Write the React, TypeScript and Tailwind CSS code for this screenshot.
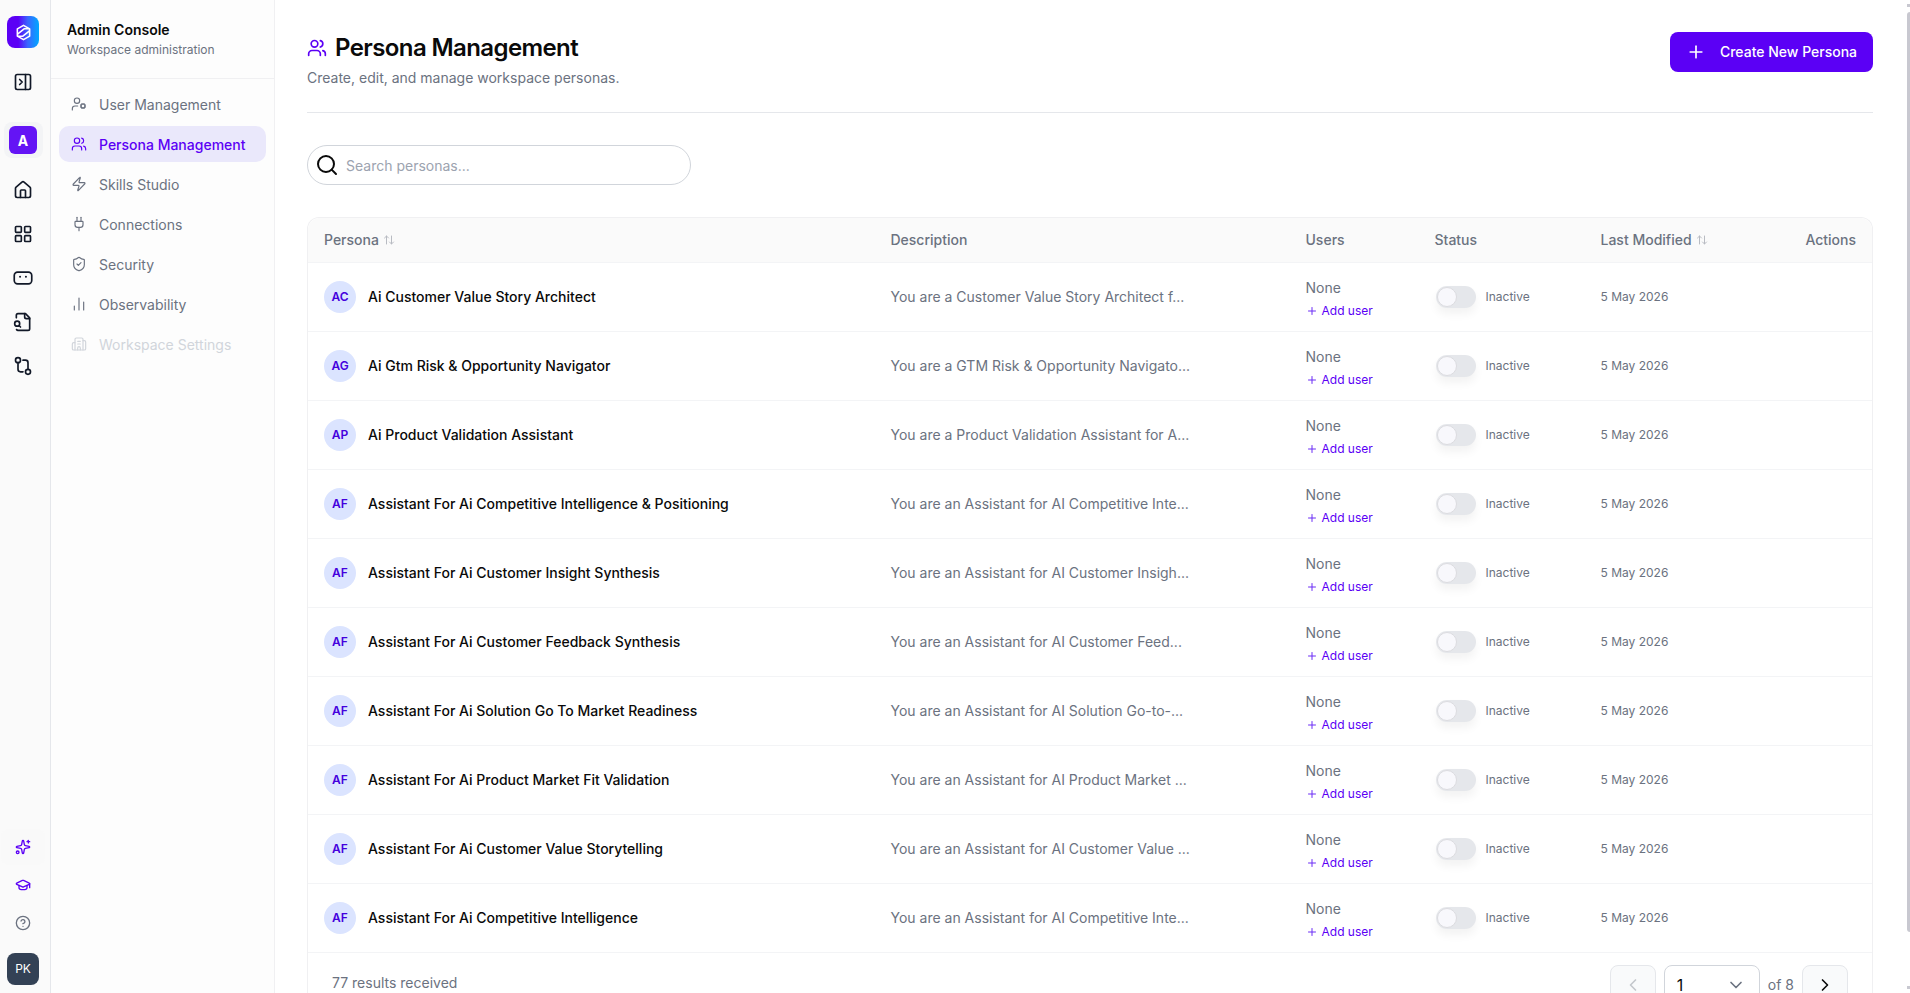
import React from "react";
import { ArrowUpDown, BarChart2, Building2, ChevronDown, ChevronLeft, ChevronRight, CircleHelp, GraduationCap, House, LayoutGrid, PanelRightClose, Plug, Plus, Search, ShieldCheck, Sparkles, UserCog, Users, Zap } from "lucide-react";

const personas = [
  ["AC", "Ai Customer Value Story Architect", "You are a Customer Value Story Architect f..."],
  ["AG", "Ai Gtm Risk & Opportunity Navigator", "You are a GTM Risk & Opportunity Navigato..."],
  ["AP", "Ai Product Validation Assistant", "You are a Product Validation Assistant for A..."],
  ["AF", "Assistant For Ai Competitive Intelligence & Positioning", "You are an Assistant for AI Competitive Inte..."],
  ["AF", "Assistant For Ai Customer Insight Synthesis", "You are an Assistant for AI Customer Insigh..."],
  ["AF", "Assistant For Ai Customer Feedback Synthesis", "You are an Assistant for AI Customer Feed..."],
  ["AF", "Assistant For Ai Solution Go To Market Readiness", "You are an Assistant for AI Solution Go-to-..."],
  ["AF", "Assistant For Ai Product Market Fit Validation", "You are an Assistant for AI Product Market ..."],
  ["AF", "Assistant For Ai Customer Value Storytelling", "You are an Assistant for AI Customer Value ..."],
  ["AF", "Assistant For Ai Competitive Intelligence", "You are an Assistant for AI Competitive Inte..."],
];

const nav = [
  { label: "User Management", Icon: UserCog },
  { label: "Persona Management", Icon: Users, active: true },
  { label: "Skills Studio", Icon: Zap },
  { label: "Connections", Icon: Plug },
  { label: "Security", Icon: ShieldCheck },
  { label: "Observability", Icon: BarChart2 },
  { label: "Workspace Settings", Icon: Building2, disabled: true },
];

function Logo() {
  return (
    <div className="flex h-8 w-8 items-center justify-center rounded-lg bg-[linear-gradient(90deg,#5b00f5_0%,#5b00f5_35%,#3a66ff_65%,#00a8ff_100%)]">
      <svg width="17" height="17" viewBox="0 0 18 18" fill="none" stroke="white" strokeWidth="1.7" strokeLinejoin="round" strokeLinecap="round">
        <path d="M9 1.5l6.5 3.7v7.6L9 16.5l-6.5-3.7V5.2z" />
        <path d="M3 10.5l7-5.5h5M15 7.5l-7 5.5H3" />
      </svg>
    </div>
  );
}

function BotIcon() {
  return (
    <svg width="20" height="20" viewBox="0 0 24 24" fill="none" stroke="#111827" strokeWidth="2">
      <rect x="1.5" y="5" width="21" height="14" rx="4" />
      <circle cx="8.5" cy="10.5" r="1.2" fill="#111827" stroke="none" />
      <circle cx="15.5" cy="10.5" r="1.2" fill="#111827" stroke="none" />
    </svg>
  );
}

function FileFind() {
  return (
    <svg width="20" height="20" viewBox="0 0 24 24" fill="none" stroke="#111827" strokeWidth="2" strokeLinecap="round" strokeLinejoin="round">
      <path d="M14 2v4a2 2 0 0 0 2 2h4" />
      <path d="M4.268 21a2 2 0 0 0 1.727 1H18a2 2 0 0 0 2-2V7l-5-5H6a2 2 0 0 0-2 2v3" />
      <path d="m9 18-1.5-1.5" />
      <circle cx="5" cy="14" r="3" />
    </svg>
  );
}

function Flow() {
  return (
    <svg width="20" height="20" viewBox="0 0 24 24" fill="none" stroke="#111827" strokeWidth="2" strokeLinecap="round" strokeLinejoin="round">
      <circle cx="6" cy="5" r="3" />
      <circle cx="18" cy="19" r="3" />
      <path d="M6 8v8a3 3 0 0 0 3 3h3" />
      <path d="M18 16V8a3 3 0 0 0-3-3h-3" />
    </svg>
  );
}

function RailSlot({ children }: { children: React.ReactNode }) {
  return <div className="flex h-11 w-full items-center justify-center">{children}</div>;
}

function Rail() {
  return (
    <aside className="flex h-full w-[51px] shrink-0 flex-col items-center border-r border-[#e5e7eb] bg-[#fafafa] pr-1">
      <div className="mt-4"><Logo /></div>
      <div className="mt-3 w-full"><RailSlot><PanelRightClose className="h-5 w-5 text-[#111827]" strokeWidth={2} /></RailSlot></div>
      <div className="mb-[10px] mt-[18px] flex h-9 w-[39px] items-center justify-center rounded-lg bg-[#f3f4f6]">
        <div className="flex h-7 w-7 items-center justify-center rounded-md bg-[#6414f5] text-[14px] font-bold text-white">A</div>
      </div>
      <RailSlot><House className="h-5 w-5 text-[#111827]" strokeWidth={2} /></RailSlot>
      <RailSlot><LayoutGrid className="h-5 w-5 text-[#111827]" strokeWidth={2} /></RailSlot>
      <RailSlot><BotIcon /></RailSlot>
      <RailSlot><FileFind /></RailSlot>
      <RailSlot><Flow /></RailSlot>
      <div className="flex-1" />
      <div className="flex h-9 w-[44px] items-center justify-center rounded-lg bg-[#f9f9f9]">
        <Sparkles className="h-4 w-4 text-[#5b00f5]" strokeWidth={2} />
      </div>
      <GraduationCap className="mt-[12px] h-4 w-4 text-[#5b00f5]" strokeWidth={2} />
      <CircleHelp className="mt-[22px] h-4 w-4 text-[#6b7280]" strokeWidth={2} />
      <div className="mb-2 mt-[22px] flex h-8 w-8 items-center justify-center rounded-lg bg-[#334155] text-[12px] text-white">PK</div>
    </aside>
  );
}

function Sidebar() {
  return (
    <aside className="flex h-full w-[224px] shrink-0 flex-col border-r border-[#f0f0f2] bg-[#fdfdfd]">
      <div className="h-[79px] border-b border-[#f0f0f2] pl-[16px] pt-[20px]">
        <div className="text-[14px] font-semibold leading-5 text-[#0a0a0a]">Admin Console</div>
        <div className="text-[12px] leading-5 text-[#6b7280]">Workspace administration</div>
      </div>
      <nav className="flex flex-col gap-1 px-2 pt-[7px]">
        {nav.map(({ label, Icon, active, disabled }) => (
          <div
            key={label}
            className={
              active
                ? "flex h-9 items-center gap-3 rounded-[10px] bg-[#eae8fb] px-[12px] text-[14px] font-medium text-[#5b00f5]"
                : disabled
                  ? "flex h-9 items-center gap-3 rounded-[10px] px-[12px] text-[14px] text-[#d1d5db]"
                  : "flex h-9 items-center gap-3 rounded-[10px] px-[12px] text-[14px] text-[#6b7280]"
            }
          >
            <Icon className="h-4 w-4" strokeWidth={1.75} />
            <span>{label}</span>
          </div>
        ))}
      </nav>
    </aside>
  );
}

function Row({ p }: { p: string[] }) {
  return (
    <div className="grid h-[69px] grid-cols-[566.5px_415px_129px_166px_1fr] items-center border-b border-[#f3f4f6] last:border-b-[#e5e7eb]">
      <div className="flex items-center gap-3 pl-4">
        <div className="flex h-8 w-8 items-center justify-center rounded-full bg-[#dbe4ff] text-[12px] font-semibold text-[#4400dd]">{p[0]}</div>
        <span className="text-[14px] font-medium leading-5 text-[#0a0a0a]">{p[1]}</span>
      </div>
      <div className="pl-4 text-[14px] leading-5 text-[#6b7280]">{p[2]}</div>
      <div className="pl-4 pt-[3px]">
        <div className="text-[14px] leading-5 text-[#6b7280]">None</div>
        <div className="mt-[5px] flex items-center gap-1 text-[12px] leading-4 text-[#5b00f5]">
          <Plus className="h-3 w-3 text-[#6b2cf5]" strokeWidth={2} />
          <span>Add user</span>
        </div>
      </div>
      <div className="flex items-center pl-[17px]">
        <div className="flex h-[22px] w-10 items-center rounded-full bg-[#e5e7eb] pl-[1px] shadow-[0_6px_10px_rgba(0,0,0,0.05)]">
          <div className="h-5 w-5 rounded-full border border-[#dcdce0] bg-[#f8f8fc]" />
        </div>
        <span className="ml-[10px] text-[12px] leading-4 text-[#6b7280]">Inactive</span>
      </div>
      <div className="pl-4 text-[12px] leading-4 text-[#6b7280]">5 May 2026</div>
    </div>
  );
}

export default function App() {
  return (
    <div className="relative flex h-[993px] w-full overflow-hidden bg-white font-['Inter',sans-serif]">
      <Rail />
      <Sidebar />
      <main className="min-w-0 flex-1 overflow-hidden pl-8 pr-[37px] pt-8">
        <div className="flex h-[81px] items-start justify-between border-b border-[#e5e7eb]">
          <div>
            <div className="flex items-center gap-2">
              <Users className="h-5 w-5 text-[#5b00f5]" strokeWidth={2} />
              <h1 className="text-[24px] font-semibold leading-[32px] tracking-tight text-[#0a0a0a]">Persona Management</h1>
            </div>
            <p className="mt-1 text-[14px] leading-5 text-[#6b7280]">Create, edit, and manage workspace personas.</p>
          </div>
          <button className="flex h-10 w-[203px] items-center justify-center gap-[14px] rounded-lg bg-[#5b00f5] text-[14px] font-medium leading-5 text-white">
            <Plus className="h-5 w-5" strokeWidth={2} />
            Create New Persona
          </button>
        </div>
        <div className="mt-8 flex h-10 w-[384px] items-center gap-[7px] rounded-full border border-[#d1d5db] pl-[7px]">
          <Search className="h-6 w-6 text-[#0a0a0a]" strokeWidth={2} />
          <span className="pt-[1px] text-[14px] leading-5 text-[#9ca3af]">Search personas...</span>
        </div>
        <div className="mt-8 rounded-t-xl border-x border-t border-[#f0f0f2]">
          <div className="grid h-[45px] grid-cols-[566.5px_415px_129px_166px_1fr_120px] items-center rounded-t-xl border-b border-[#f3f4f6] bg-[#fafafa] text-[14px] font-medium leading-5 text-[#6b7280]">
            <div className="flex items-center gap-1 pl-4">Persona <ArrowUpDown className="h-3 w-3 text-[#b8bbc2]" strokeWidth={2} /></div>
            <div className="pl-4">Description</div>
            <div className="pl-4">Users</div>
            <div className="pl-4">Status</div>
            <div className="flex items-center gap-1 pl-4">Last Modified <ArrowUpDown className="h-3 w-3 text-[#b8bbc2]" strokeWidth={2} /></div>
            <div className="pr-4 text-right">Actions</div>
          </div>
          {personas.map((p, i) => <Row key={i} p={p} />)}
          <div className="flex items-start justify-between pl-6 pr-6 pt-3">
            <span className="mt-[8px] text-[14px] leading-5 text-[#6b7280]">77 results received</span>
            <div className="flex items-center gap-2">
              <div className="flex h-10 w-[46px] items-center justify-center rounded-lg border border-[#e5e7eb] bg-[#f9fafb]">
                <ChevronLeft className="h-5 w-5 text-[#c4c7cc]" strokeWidth={2} />
              </div>
              <div className="flex h-10 w-24 items-center justify-between rounded-lg border border-[#d1d5db] pl-3 pr-[13px] text-[16px] text-[#0a0a0a]">
                1
                <ChevronDown className="h-5 w-5 text-[#6b7280]" strokeWidth={2} />
              </div>
              <span className="text-[14px] leading-5 text-[#6b7280]">of 8</span>
              <div className="flex h-10 w-[46px] items-center justify-center rounded-lg border border-[#e5e7eb] bg-[#f9fafb]">
                <ChevronRight className="h-5 w-5 text-[#0a0a0a]" strokeWidth={2} />
              </div>
            </div>
          </div>
        </div>
      </main>
      <div className="absolute right-0 top-[12px] h-[920px] w-[3px] rounded-l bg-[#c8c8d0]" />
      <div className="absolute right-0 top-[4px] h-[3px] w-[3px] bg-[#c8c8d0]" />
      <div className="absolute right-0 top-[986px] h-[3px] w-[3px] bg-[#c8c8d0]" />
    </div>
  );
}
